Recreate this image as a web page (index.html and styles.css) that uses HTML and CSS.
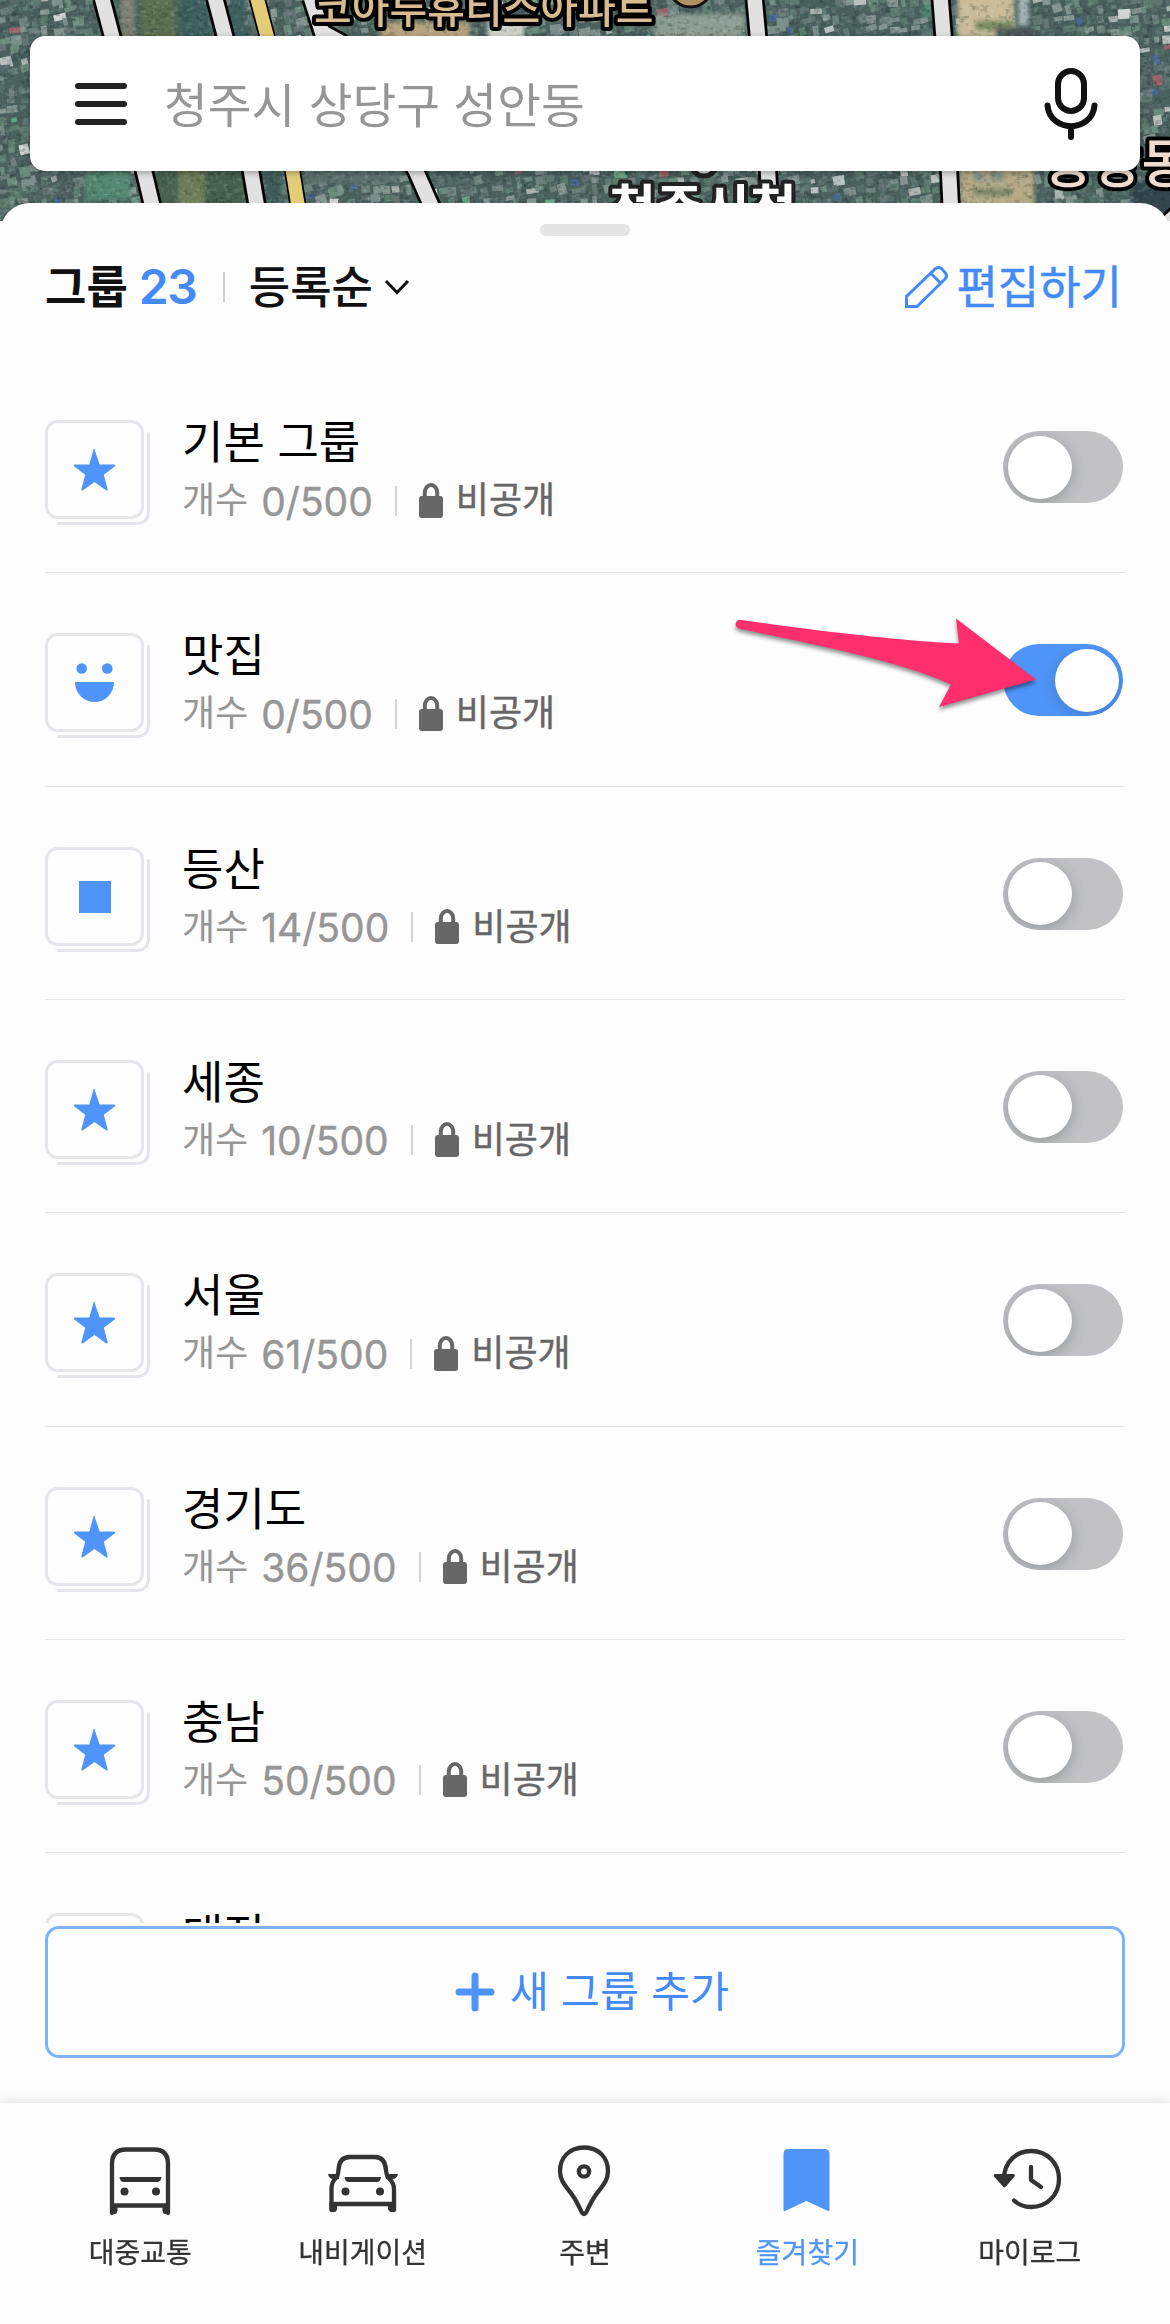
FILE: index.html
```html
<!DOCTYPE html>
<html lang="ko">

<head>
    <meta charset="UTF-8">
    <meta name="viewport" content="width=device-width, initial-scale=1.0">
    <title>즐겨찾기</title>
    <link rel="stylesheet" href="styles.css">
</head>

<body>
    <!-- icons used more than once -->
    <svg class="symbols">
        <symbol id="card" viewBox="0 0 106 106">
            <rect x="1.5" y="1.5" width="96" height="96" rx="11" />
            <path d="M103.5 13.500V91q0 12.500-12.500 12.500H13.500" />
        </symbol>
        <symbol id="star" viewBox="0 0 106 106">
            <path d="M49.500 29.500L54.700 44.500H69.500Q71 45.300 69.700 46.500L58.800 54.700L62.700 69.300Q62.700 71 61 70.300L49.500 62L38 70.300Q36.300 71 36.300 69.300L40.200 54.700L29.300 46.500Q28 45.300 29.500 44.500H44.300L48.500 29.500Q49.500 28 50.500 29.500Z" />
        </symbol>
        <symbol id="smile" viewBox="0 0 106 106">
            <circle cx="36.700" cy="35.500" r="5.300" />
            <circle cx="62.300" cy="35.500" r="5.300" />
            <path d="M30 49H69A19.500 20 0 0 1 30 49Z" />
        </symbol>
        <symbol id="square" viewBox="0 0 106 106">
            <rect x="34" y="34" width="32" height="32" />
        </symbol>
        <symbol id="lock" viewBox="0 0 24 35">
            <path d="M5.800 15V9.500a6.200 7.500 0 0 1 12.400 0V15" fill="none" stroke="#666" stroke-width="4" />
            <rect y="13" width="24" height="22" rx="3" fill="#666" />
        </symbol>
    </svg>

    <div class="map">
        <canvas id="ground" width="1170" height="221"></canvas>
        <svg class="roads" viewBox="0 0 1170 221">
            <g class="edge">
                <path d="M102 -2L112 36L144 171L158 230" />
                <path d="M215 -2L225 36L251 171L261 230" />
                <path class="main-road" d="M257 -2L267 36L292.500 171L302 230" />
                <path d="M311 -2L322 32L340 42L416 171L442 230" />
                <path d="M754.500 -2L758 36L768 171L771 230" />
                <path d="M940.500 -2L943.500 36L949 171L952 230" />
                <path d="M1158 232L1184 208" />
            </g>
            <g class="road">
                <path d="M102 -2L112 36L144 171L158 230" />
                <path d="M215 -2L225 36L251 171L261 230" />
                <path class="main-road" d="M257 -2L267 36L292.500 171L302 230" />
                <path d="M311 -2L322 32L340 42L416 171L442 230" />
                <path d="M754.500 -2L758 36L768 171L771 230" />
                <path d="M940.500 -2L943.500 36L949 171L952 230" />
                <path d="M1158 232L1184 208" />
            </g>
            <circle cx="690.500" cy="-15" r="22" fill="#b08f60" stroke="#111" stroke-width="3" />
            <circle cx="704" cy="163" r="13" fill="#ddd" stroke="#222" stroke-width="5" />
            <text class="place apt" x="314" y="23">코아루휴티스아파트</text>
            <text class="place hall" x="609" y="227">청주시청</text>
            <text class="place dong" x="1044" y="183">중앙동</text>
        </svg>
    </div>

    <header class="search">
        <svg class="menu" width="54" height="44" viewBox="0 0 54 44">
            <path d="M4 4H50M4 22H50M4 40H50" />
        </svg>
        <span class="query">청주시 상당구 성안동</span>
        <svg class="mic" width="56" height="74" viewBox="0 0 56 74">
            <rect x="15" y="4" width="26" height="40" rx="13" />
            <path d="M4.500 38.500C7 66 49 66 51.500 38.500M28 60V70" />
        </svg>
    </header>

    <main class="sheet">
        <div class="handle"></div>
        <div class="toolbar">
            <span class="label">그룹</span>
            <span class="total">23</span>
            <span class="bar"></span>
            <span class="sort">등록순</span>
            <svg class="chevron" width="26" height="16" viewBox="0 0 26 16">
                <path d="M2 2L13 13.500L24 2" />
            </svg>
            <svg class="pencil" width="44" height="44" viewBox="0 0 44 44">
                <path d="M2.500 41.500V31.500L31 4Q34.500 1 38 4L41 7.500Q44 11 41 14L13 41.500ZM27 8.500L36.500 18" />
            </svg>
            <span class="edit">편집하기</span>
        </div>

        <div class="list">
            <div class="group">
                <svg class="thumb"><use href="#card" /><use class="shape" href="#star" /></svg>
                <div class="info">
                    <div class="name">기본 그룹</div>
                    <div class="meta"><span>개수</span><span class="num">0/500</span><span class="line"></span><svg class="lock"><use href="#lock" /></svg><span class="private">비공개</span></div>
                </div>
                <div class="toggle"></div>
            </div>
            <div class="group">
                <svg class="thumb"><use href="#card" /><use class="shape" href="#smile" /></svg>
                <div class="info">
                    <div class="name">맛집</div>
                    <div class="meta"><span>개수</span><span class="num">0/500</span><span class="line"></span><svg class="lock"><use href="#lock" /></svg><span class="private">비공개</span></div>
                </div>
                <div class="toggle on"></div>
                <svg class="arrow" viewBox="0 0 310 100">
                    <path d="M10 6Q152 26 228 29.500L225 4.500L305 65.500L208 93L220 70.500C170 46 60 26 8 14.500A4.300 4.300 0 0 1 10 6Z" />
                </svg>
            </div>
            <div class="group">
                <svg class="thumb"><use href="#card" /><use class="shape" href="#square" /></svg>
                <div class="info">
                    <div class="name">등산</div>
                    <div class="meta"><span>개수</span><span class="num">14/500</span><span class="line"></span><svg class="lock"><use href="#lock" /></svg><span class="private">비공개</span></div>
                </div>
                <div class="toggle"></div>
            </div>
            <div class="group">
                <svg class="thumb"><use href="#card" /><use class="shape" href="#star" /></svg>
                <div class="info">
                    <div class="name">세종</div>
                    <div class="meta"><span>개수</span><span class="num">10/500</span><span class="line"></span><svg class="lock"><use href="#lock" /></svg><span class="private">비공개</span></div>
                </div>
                <div class="toggle"></div>
            </div>
            <div class="group">
                <svg class="thumb"><use href="#card" /><use class="shape" href="#star" /></svg>
                <div class="info">
                    <div class="name">서울</div>
                    <div class="meta"><span>개수</span><span class="num">61/500</span><span class="line"></span><svg class="lock"><use href="#lock" /></svg><span class="private">비공개</span></div>
                </div>
                <div class="toggle"></div>
            </div>
            <div class="group">
                <svg class="thumb"><use href="#card" /><use class="shape" href="#star" /></svg>
                <div class="info">
                    <div class="name">경기도</div>
                    <div class="meta"><span>개수</span><span class="num">36/500</span><span class="line"></span><svg class="lock"><use href="#lock" /></svg><span class="private">비공개</span></div>
                </div>
                <div class="toggle"></div>
            </div>
            <div class="group">
                <svg class="thumb"><use href="#card" /><use class="shape" href="#star" /></svg>
                <div class="info">
                    <div class="name">충남</div>
                    <div class="meta"><span>개수</span><span class="num">50/500</span><span class="line"></span><svg class="lock"><use href="#lock" /></svg><span class="private">비공개</span></div>
                </div>
                <div class="toggle"></div>
            </div>
            <div class="group">
                <svg class="thumb"><use href="#card" /></svg>
                <div class="info">
                    <div class="name">대전</div>
                </div>
            </div>
        </div>

        <div class="add">
            <svg width="40" height="40" viewBox="0 0 40 40">
                <path d="M20 4V36M4 20H36" />
            </svg>
            <span>새 그룹 추가</span>
        </div>
    </main>

    <nav class="tabs">
        <div class="tab">
            <svg viewBox="0 0 80 80">
                <path d="M12 73V24Q12 9.500 26 9.500H54Q68 9.500 68 24V73M12 65.500H68" />
                <path class="fill" d="M10 65H17.500V71Q17 74 15.500 74H12Q10.500 74 10 71ZM62.500 65H70V71Q69.500 74 68 74H64.500Q63 74 62.500 71ZM19.500 37H61.500Q61 42 57 42H24Q20 42 19.500 37Z" />
                <circle class="fill" cx="24.500" cy="51.500" r="4" />
                <circle class="fill" cx="56" cy="51.500" r="4" />
            </svg>
            <span>대중교통</span>
        </div>
        <div class="tab">
            <svg viewBox="0 0 80 80">
                <path d="M8.500 70V49Q8.500 42 13 38Q15 36 15.500 30Q16 17 27 17H52Q62 17 63 30Q63.500 36 66 38.500Q71 43 71 49V70M8.500 64H71" />
                <path class="fill" d="M5 34H16V39H10Q6 39 5 34ZM75 34H63V39H69Q74 39 75 34ZM6.500 63H14V69Q13.500 72 12 72H8.500Q7 72 6.500 69ZM65 63H73V69Q72.500 72 71 72H67.500Q66 72 65 69ZM21.500 37H58Q57.500 42 54 42H26Q22 42 21.500 37Z" />
                <circle class="fill" cx="22.500" cy="51.500" r="4" />
                <circle class="fill" cx="57" cy="51.500" r="4" />
            </svg>
            <span>내비게이션</span>
        </div>
        <div class="tab">
            <svg viewBox="0 0 80 80">
                <path d="M39 7.500C24 7.500 15 18 15 31C15 42 22 47 28 56C35 66 36 74 39 74C42 74 43 66 50 56C56 47 63 42 63 31C63 18 54 7.500 39 7.500Z" />
                <circle cx="39" cy="31.500" r="5.200" />
            </svg>
            <span>주변</span>
        </div>
        <div class="tab active">
            <svg viewBox="0 0 80 80">
                <path class="fill" d="M16.500 14Q16.500 9 21.500 9H57.500Q62.500 9 62.500 14V70Q62.500 71.500 61 71L39.500 61L18 71Q16.500 71.500 16.500 70Z" />
            </svg>
            <span>즐겨찾기</span>
        </div>
        <div class="tab">
            <svg viewBox="0 0 80 80">
                <path d="M14 37C15 22 26 11 41 11C57 11 69 23 69 39C69 55 57 67 41 67Q31 67 24 60.500" />
                <path d="M41 27V40L51 47" />
                <path class="fill" d="M5 34H23.500Q25.500 34.500 24.500 36.500L16 46.500Q14.500 48 13 46.500L4 36.500Q3 34.500 5 34Z" />
            </svg>
            <span>마이로그</span>
        </div>
    </nav>

    <script>
        let ctx = document.querySelector("#ground").getContext("2d");
        let seed = 7;

        function rand() {
            seed = (seed * 16807) % 2147483647;
            return seed / 2147483647;
        }

        let roofs = ["#55706a", "#5f7b71", "#6a8a7c", "#4b615e", "#7b8f8b", "#637573", "#84958f", "#546b69", "#6c817b", "#5b7a6c"];
        let bright = ["#b9c2bf", "#97606a", "#4a6894", "#6aa78a", "#cfd5d2", "#a9b3ae"];

        ctx.fillStyle = "#4a605d";
        ctx.fillRect(0, 0, 1170, 221);

        // houses
        ctx.filter = "blur(0.7px)";
        for (let y = -5; y < 225; y += 10) {
            for (let x = -5; x < 1175; x += 11) {
                let list = rand() > 0.9 ? bright : roofs;
                ctx.fillStyle = list[Math.floor(rand() * list.length)];
                ctx.save();
                ctx.translate(x + rand() * 5, y + rand() * 5);
                ctx.rotate(-0.3 + rand() * 0.25);
                ctx.fillRect(0, 0, 4 + rand() * 9, 4 + rand() * 7);
                ctx.restore();
            }
        }

        // fields, river side and bare ground
        let areas = [
            ["#47665a", 112, -6, 104, 50],
            ["#7c7f72", 121, -6, 14, 50],
            ["#5c7150", 142, -6, 34, 50],
            ["#3f5f60", 180, -6, 30, 50],
            ["#3f5f60", 228, -6, 18, 50],
            ["#548a73", 86, 172, 44, 28],
            ["#47604f", 154, 166, 90, 50],
            ["#6c7d58", 178, 166, 28, 50],
            ["#3f5c58", 262, 166, 20, 50],
            ["#5c716d", 304, 168, 96, 16],
            ["#b7a37f", 380, 22, 90, 20],
            ["#d0d2cc", 488, 22, 36, 20],
            ["#8c9d93", 655, 14, 90, 28],
            ["#548a73", 922, 3, 10, 14],
            ["#cbbb99", 958, -6, 56, 44],
            ["#78895f", 976, 21, 38, 9],
            ["#9fb0b2", 1018, -6, 11, 32],
            ["#4b5658", 996, 28, 40, 12],
            ["#b5a985", 960, 166, 74, 50],
            ["#6f815e", 974, 189, 38, 6],
            ["#7f8f83", 974, 172, 10, 10],
            ["#7f8f83", 990, 172, 14, 9],
            ["#33464d", 1130, 180, 46, 46]
        ];
        ctx.filter = "blur(2px)";
        for (let [color, x, y, w, h] of areas) {
            ctx.fillStyle = color;
            ctx.fillRect(x, y, w, h);
        }

        // fine grain
        ctx.filter = "none";
        for (let i = 0; i < 16000; i++) {
            ctx.fillStyle = rand() > 0.5 ? "rgba(220, 235, 225, 0.1)" : "rgba(15, 35, 35, 0.15)";
            ctx.fillRect(rand() * 1170, rand() * 221, 1 + rand() * 4, 1 + rand() * 3);
        }
    </script>
</body>

</html>
```
FILE: styles.css
```css
* {
    margin: 0;
    padding: 0;
    box-sizing: border-box;
}

body {
    width: 1170px;
    height: 2324px;
    display: flex;
    flex-direction: column;
    position: relative;
    overflow: hidden;
    background-color: #fdfdfd;
    font-family: "Noto Sans CJK KR", sans-serif;
    line-height: 1;
    color: #111;
}

svg {
    flex-shrink: 0;
    fill: none;
}

span {
    white-space: nowrap;
}

.symbols {
    position: absolute;
    width: 0;
    height: 0;
}

/* map behind everything */
.map {
    position: absolute;
    top: 0;
    left: 0;
    width: 1170px;
    height: 221px;
    overflow: hidden;
}

.roads {
    position: absolute;
    top: 0;
    left: 0;
    width: 1170px;
    height: 221px;
}

.edge path {
    stroke: #050505;
    stroke-width: 20px;
}

.edge .main-road {
    stroke-width: 17px;
}

.road path {
    stroke: #e1e1e1;
    stroke-width: 14.5px;
}

.road .main-road {
    stroke: #e3cb78;
    stroke-width: 13.5px;
}

.place {
    font-weight: 700;
    paint-order: stroke;
    stroke: #000;
    stroke-width: 8px;
    stroke-linejoin: round;
}

.apt {
    font-size: 41px;
    font-weight: 500;
    fill: #d9bb92;
}

.hall {
    font-size: 51px;
    fill: #fff;
    stroke: #222;
}

.dong {
    font-size: 53px;
    font-weight: 500;
    fill: #efdccf;
}

/* search bar */
.search {
    position: relative;
    height: 135px;
    margin: 36px 30px 0;
    padding: 0 41px 0 44px;
    display: flex;
    align-items: center;
    background-color: #fff;
    border-radius: 15px;
    box-shadow: 0 2px 6px rgba(0, 0, 0, 0.3);
}

.menu {
    stroke: #222;
    stroke-width: 6px;
    stroke-linecap: round;
}

.query {
    margin-left: 36px;
    margin-top: -2px;
    font-size: 47.6px;
    color: #969696;
}

.mic {
    margin-left: auto;
    stroke: #111;
    stroke-width: 6px;
    stroke-linecap: round;
}

/* bottom sheet */
.sheet {
    position: relative;
    height: 1900px;
    margin-top: 32px;
    padding: 21px 45px 0;
    background-color: #fdfdfd;
    border-radius: 30px 30px 0 0;
}

.handle {
    width: 90px;
    height: 12px;
    margin: 0 auto;
    border-radius: 6px;
    background-color: #e4e4e4;
}

.toolbar {
    height: 124px;
    padding-bottom: 22px;
    display: flex;
    align-items: center;
    font-size: 45px;
}

.label {
    margin-top: -5px;
    font-weight: 700;
}

.total {
    width: 59px;
    margin-left: 11px;
    font-family: Inter, sans-serif;
    font-size: 48px;
    font-weight: 600;
    letter-spacing: -1.5px;
    color: #448af9;
}

.bar {
    width: 2px;
    height: 30px;
    margin-left: 25px;
    background-color: #d0d0d0;
}

.sort {
    margin-left: 24px;
    margin-top: -5px;
    font-weight: 500;
}

.chevron {
    margin-left: 11px;
    stroke: #111;
    stroke-width: 3px;
}

.pencil {
    margin-left: auto;
    stroke: #448af9;
    stroke-width: 3px;
}

.edit {
    margin-left: 8px;
    margin-right: 3px;
    margin-top: -5px;
    color: #448af9;
    -webkit-text-stroke: 0.5px #448af9;
}

/* groups */
.list {
    height: 1563px;
    overflow: hidden;
}

.group {
    position: relative;
    height: calc(640px / 3);
    padding-top: 60px;
    display: flex;
    align-items: flex-start;
    border-bottom: 1px solid #e6e6e8;
}

.thumb {
    width: 106px;
    height: 106px;
    stroke: #e5e5ec;
    stroke-width: 3px;
    stroke-linecap: round;
}

.shape {
    fill: #4f95f9;
    stroke: none;
}

.info {
    margin-left: 31px;
    margin-top: -3px;
}

.name {
    font-size: 45px;
    color: #000;
}

.meta {
    height: 36px;
    margin-top: 17px;
    display: flex;
    align-items: center;
    font-size: 36px;
    color: #969696;
}

.num {
    margin-left: 13px;
    margin-top: 8px;
    font-family: Inter, sans-serif;
    font-size: 39px;
    -webkit-text-stroke: 0.4px #969696;
}

.line {
    width: 2px;
    height: 30px;
    margin: 7px 22px 0;
    background-color: #d4d4d4;
}

.lock {
    width: 24px;
    height: 35px;
    margin-top: 6px;
}

.private {
    margin-left: 13px;
    color: #666;
    -webkit-text-stroke: 0.4px #666;
}

.toggle {
    width: 120px;
    height: 72px;
    margin-top: 11px;
    margin-left: auto;
    margin-right: 2px;
    padding: 4.5px;
    display: flex;
    border-radius: 36px;
    overflow: hidden;
    background-color: #c1c1c6;
}

.toggle::before {
    content: "";
    width: 64px;
    height: 63px;
    border-radius: 50%;
    background-color: #fff;
    box-shadow: 0 4px 12px 2px rgba(60, 80, 70, 0.25);
}

.on {
    justify-content: flex-end;
    background-color: #4f95f9;
}

.on::before {
    box-shadow: 0 4px 12px 2px rgba(40, 60, 90, 0.2);
}

/* pointer lying over the switch */
.arrow {
    position: absolute;
    left: 686px;
    top: 41px;
    width: 310px;
    height: 100px;
    overflow: visible;
    fill: #ff2e6c;
    filter: drop-shadow(0 3px 2px rgba(0, 0, 0, 0.45));
}

.add {
    height: 132px;
    margin-top: 3px;
    padding-left: 14px;
    display: flex;
    justify-content: center;
    align-items: center;
    border: 3px solid #7fb2fb;
    border-radius: 14px;
    font-size: 42.5px;
    color: #448af9;
    stroke: #4f95f9;
    stroke-width: 7px;
    stroke-linecap: round;
}

.add span {
    margin-left: 15px;
    margin-top: -6px;
}

/* tab bar */
.tabs {
    position: relative;
    height: 221px;
    padding: 37px 29px 0;
    display: grid;
    grid-template-columns: repeat(5, 1fr);
    background-color: #fdfdfd;
    box-shadow: 0 0 12px rgba(0, 0, 0, 0.16);
}

.tab {
    display: flex;
    flex-direction: column;
    align-items: center;
    font-size: 28px;
    color: #333;
}

.tab svg {
    width: 80px;
    height: 80px;
    stroke: currentColor;
    stroke-width: 4.3px;
    stroke-linecap: round;
    stroke-linejoin: round;
}

.tab .fill {
    fill: currentColor;
    stroke: none;
}

.tab span {
    margin-top: 17px;
    -webkit-text-stroke: 0.3px currentColor;
}

.active {
    color: #4f95f9;
}
```
